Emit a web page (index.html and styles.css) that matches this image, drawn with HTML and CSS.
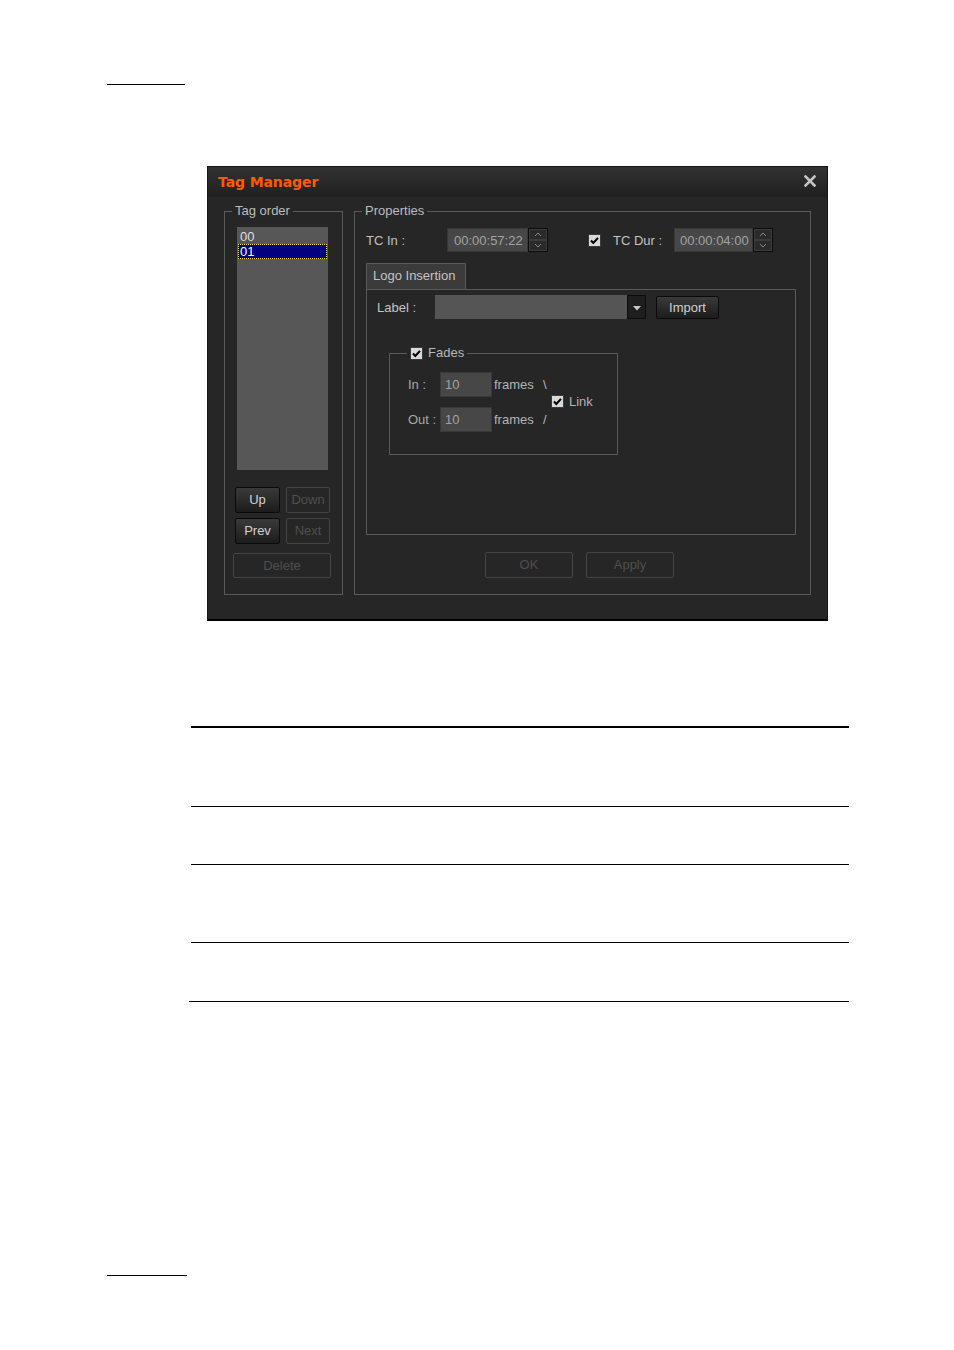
FILE: index.html
```html
<!DOCTYPE html>
<html>
<head>
<meta charset="utf-8">
<title>Tag Manager</title>
<link rel="stylesheet" href="styles.css">
</head>
<body>
<div class="page">
  <div class="rule-head"></div>

  <div class="dialog">
    <div class="titlebar">
      <span class="title">Tag Manager</span>
      <svg class="close" width="12" height="12" viewBox="0 0 12 12"><path d="M1.5 1.5 L10.5 10.5 M10.5 1.5 L1.5 10.5" stroke="#c4c4c4" stroke-width="2.6" stroke-linecap="square"/></svg>
    </div>

    <div class="dlg-body">
      <fieldset class="group tag-order">
        <legend>Tag order</legend>
        <div class="tag-inner">
          <div class="list">
            <div class="item">00</div>
            <div class="item sel">01</div>
          </div>
          <div class="btn-row first">
            <button class="btn on small">Up</button>
            <button class="btn off small2">Down</button>
          </div>
          <div class="btn-row">
            <button class="btn on small">Prev</button>
            <button class="btn off small2">Next</button>
          </div>
          <button class="btn off delete">Delete</button>
        </div>
      </fieldset>

      <fieldset class="group props">
        <legend>Properties</legend>
        <div class="props-inner">
          <div class="tc-row">
            <span class="tc-label">TC In :</span>
            <span class="field tc-field">00:00:57:22</span>
            <span class="spin"><svg width="20" height="24" viewBox="0 0 20 24"><rect x="0.5" y="0.5" width="19" height="23" fill="#202020" stroke="#0c0c0c"/><rect x="1.5" y="1.5" width="17" height="10" fill="#2a2a2a" stroke="#3c3c3c"/><rect x="1.5" y="12.5" width="17" height="10" fill="#2a2a2a" stroke="#3c3c3c"/><path d="M7 8 L10 5 L13 8" fill="none" stroke="#8a8a8a"/><path d="M7 16 L10 19 L13 16" fill="none" stroke="#8a8a8a"/></svg></span>
            <span class="check tc-check"><svg width="13" height="13" viewBox="0 0 13 13"><rect x="0.5" y="0.5" width="12" height="12" fill="#d9d9d9" stroke="#3a3a3a"/><path d="M3 6.5 L5.3 9 L10 3.8" fill="none" stroke="#000" stroke-width="2"/></svg></span>
            <span class="tc-label dur">TC Dur :</span>
            <span class="field tc-field dur-field">00:00:04:00</span>
            <span class="spin"><svg width="20" height="24" viewBox="0 0 20 24"><rect x="0.5" y="0.5" width="19" height="23" fill="#202020" stroke="#0c0c0c"/><rect x="1.5" y="1.5" width="17" height="10" fill="#2a2a2a" stroke="#3c3c3c"/><rect x="1.5" y="12.5" width="17" height="10" fill="#2a2a2a" stroke="#3c3c3c"/><path d="M7 8 L10 5 L13 8" fill="none" stroke="#8a8a8a"/><path d="M7 16 L10 19 L13 16" fill="none" stroke="#8a8a8a"/></svg></span>
          </div>

          <div class="tabs">
            <div class="tab">Logo Insertion</div>
          </div>
          <div class="panel">
            <div class="label-row">
              <span class="lbl">Label :</span>
              <span class="combo-field"></span>
              <span class="combo-btn"><svg width="8" height="5" viewBox="0 0 8 5"><path d="M0 0 H8 L4 4.5 Z" fill="#c8c8c8"/></svg></span>
              <button class="btn on import">Import</button>
            </div>

            <fieldset class="group fades">
              <legend><span class="check"><svg width="13" height="13" viewBox="0 0 13 13"><rect x="0.5" y="0.5" width="12" height="12" fill="#d9d9d9" stroke="#3a3a3a"/><path d="M3 6.5 L5.3 9 L10 3.8" fill="none" stroke="#000" stroke-width="2"/></svg></span><span class="legend-text">Fades</span></legend>
              <div class="fades-grid">
                <span class="f-lbl r1">In :</span>
                <span class="field f-field r1">10</span>
                <span class="f-frames r1">frames</span>
                <span class="f-slash r1">\</span>
                <span class="f-lbl r2">Out :</span>
                <span class="field f-field r2">10</span>
                <span class="f-frames r2">frames</span>
                <span class="f-slash r2">/</span>
                <span class="link"><span class="check"><svg width="13" height="13" viewBox="0 0 13 13"><rect x="0.5" y="0.5" width="12" height="12" fill="#d9d9d9" stroke="#3a3a3a"/><path d="M3 6.5 L5.3 9 L10 3.8" fill="none" stroke="#000" stroke-width="2"/></svg></span><span class="link-text">Link</span></span>
              </div>
            </fieldset>
          </div>

          <div class="ok-row">
            <button class="btn off wide">OK</button>
            <button class="btn off wide">Apply</button>
          </div>
        </div>
      </fieldset>
    </div>
  </div>

  <div class="doc-table">
    <div class="trow r-a"></div>
    <div class="trow r-b"></div>
    <div class="trow r-c"></div>
    <div class="trow r-d"></div>
    <div class="tend"></div>
  </div>

  <div class="rule-foot"></div>
</div>
</body>
</html>
```

FILE: styles.css
```css
* { box-sizing: border-box; }

html, body {
  margin: 0;
  padding: 0;
  background: #ffffff;
}

body {
  font-family: "Liberation Sans", Arial, sans-serif;
  font-size: 13px;
  color: #000;
}

.page {
  padding-top: 84px;
  width: 954px;
  height: 1350px;
}

.rule-head {
  margin-left: 107px;
  width: 78px;
  height: 1px;
  background: #000;
}

.rule-foot {
  margin-top: 273px;
  margin-left: 107px;
  width: 80px;
  height: 1px;
  background: #000;
}

/* ---------- dialog ---------- */
.dialog {
  margin-top: 81px;
  margin-left: 207px;
  width: 621px;
  height: 455px;
  background: #262626;
  border: 1px solid #151515;
  border-bottom: 2px solid #000;
  display: flex;
  flex-direction: column;
}

.titlebar {
  height: 30px;
  flex: none;
  display: flex;
  align-items: center;
  justify-content: space-between;
  padding: 0 11px 0 10px;
  background: linear-gradient(#323232, #1f1f1f);
}

.title {
  font-family: "DejaVu Sans", Verdana, sans-serif;
  font-weight: bold;
  font-size: 14px;
  color: #ff5a00;
  letter-spacing: -0.1px;
}

.close {
  display: block;
  margin-top: -2px;
}

.dlg-body {
  flex: 1;
  display: flex;
  gap: 11px;
  padding: 7px 16px 24px 16px;
  color: #bebebe;
}

.group {
  margin: 0;
  padding: 0;
  min-width: 0;
  border: 1px solid #5a5a5a;
}

.group > legend {
  padding: 0 3px;
  margin-left: 7px;
  line-height: 14px;
  height: 14px;
  color: #bcbcbc;
  font-size: 13px;
}

/* ---------- tag order ---------- */
.tag-order {
  width: 119px;
  flex: none;
}

.tag-inner {
  padding-top: 9px;
  display: flex;
  flex-direction: column;
}

.list {
  margin-left: 12px;
  width: 91px;
  height: 243px;
  background: #575757;
  padding: 2px 1px 0 1px;
}

.item {
  height: 15px;
  line-height: 15px;
  padding-left: 2px;
  color: #dedede;
}

.item.sel {
  background: #000080;
  color: #ffffff;
  outline: 1px dotted #f0e060;
  outline-offset: -1px;
}

.btn-row {
  display: flex;
  gap: 6px;
  margin-left: 10px;
  margin-top: 5px;
}

.btn-row.first {
  margin-top: 17px;
}

.btn {
  font-family: "Liberation Sans", Arial, sans-serif;
  font-size: 13px;
  padding: 0;
  height: 26px;
  border-radius: 2px;
  line-height: 24px;
}

.btn.on {
  background: linear-gradient(#3a3a3a, #1c1c1c);
  border: 1px solid #0a0a0a;
  color: #d2d2d2;
}

.btn.off {
  background: transparent;
  border: 1px solid #454545;
  color: #4f4f4f;
}

.small { width: 45px; }
.small2 { width: 44px; }

.delete {
  margin-top: 9px;
  margin-left: 8px;
  width: 98px;
  height: 25px !important;
}

/* ---------- properties ---------- */
.props {
  width: 457px;
  flex: none;
}

.props-inner {
  padding: 10px 0 0 11px;
}

.tc-row {
  display: flex;
  align-items: center;
  height: 24px;
}

.tc-label {
  width: 81px;
  color: #c2c2c2;
}

.tc-label.dur {
  width: 61px;
}

.field {
  background: #474747;
  border: 1px solid #383838;
  color: #a2a2a2;
  display: flex;
  align-items: center;
}

.tc-field {
  width: 81px;
  height: 24px;
  padding-left: 6px;
}

.dur-field {
  width: 79px;
  padding-left: 5px;
}

.spin {
  display: block;
  width: 20px;
  height: 24px;
}

.spin svg { display: block; }

.check {
  display: inline-block;
  width: 13px;
  height: 13px;
  vertical-align: middle;
}

.check svg { display: block; }

.tc-check {
  margin-left: 40px;
  margin-right: 12px;
}

.tabs {
  margin-top: 11px;
  display: flex;
}

.tab {
  width: 100px;
  height: 26px;
  line-height: 24px;
  padding-left: 6px;
  background: #3b3b3b;
  border: 1px solid #5a5a5a;
  border-bottom: none;
  color: #c4c4c4;
}

.panel {
  width: 430px;
  height: 246px;
  border: 1px solid #5a5a5a;
  padding: 5px 0 0 10px;
}

.label-row {
  display: flex;
  align-items: center;
  height: 24px;
}

.lbl {
  width: 58px;
  color: #c4c4c4;
}

.combo-field {
  width: 192px;
  height: 24px;
  background: #555555;
}

.combo-btn {
  width: 19px;
  height: 24px;
  background: #1e1e1e;
  border: 1px solid #0c0c0c;
  display: flex;
  align-items: center;
  justify-content: center;
  padding-top: 2px;
}

.combo-btn svg { display: block; }

.import {
  margin-left: 10px;
  width: 63px;
  height: 23px;
  line-height: 21px;
}

/* ---------- fades ---------- */
.fades {
  margin-top: 27px;
  margin-left: 12px;
  width: 229px;
  height: 109px;
}

.fades > legend {
  margin-left: 17px;
  display: flex;
  align-items: center;
  gap: 5px;
}

.legend-text { color: #b8b8b8; }

.fades-grid {
  padding: 12px 0 0 18px;
  display: grid;
  grid-template-columns: 32px 52px 51px 8px auto;
  grid-template-rows: 25px 25px;
  row-gap: 10px;
  align-items: center;
  color: #b4b4b4;
}

.r1 { grid-row: 1; }
.r2 { grid-row: 2; }

.f-lbl { color: #a8a8a8; }

.f-field {
  height: 25px;
  padding-left: 4px;
  width: 52px;
}

.f-frames { padding-left: 2px; }

.f-slash { color: #b4b4b4; }

.link {
  grid-column: 5;
  grid-row: 1 / span 2;
  display: flex;
  align-items: center;
  gap: 5px;
  margin-top: -2px;
}

/* ---------- ok row ---------- */
.ok-row {
  margin-top: 17px;
  margin-left: 119px;
  display: flex;
  gap: 13px;
}

.wide {
  width: 88px;
}

/* ---------- document table rules ---------- */
.doc-table {
  margin-top: 105px;
  margin-left: 191px;
  width: 658px;
}

.trow {
  border-top: 1px solid #000;
}

.r-a { border-top-width: 2px; height: 80px; }
.r-b { height: 58px; }
.r-c { height: 78px; }
.r-d { height: 59px; }

.tend {
  margin-left: -2px;
  width: 660px;
  height: 1px;
  background: #000;
}
```
